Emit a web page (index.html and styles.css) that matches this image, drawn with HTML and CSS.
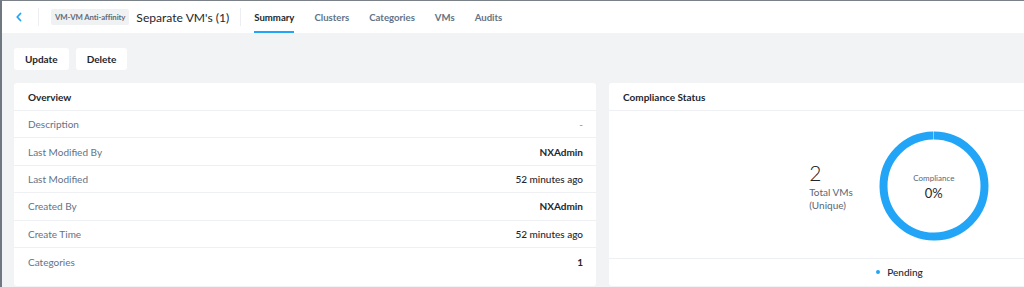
FILE: index.html
```html
<!DOCTYPE html>
<html lang="en">
<head>
    <meta charset="UTF-8">
    <meta name="viewport" content="width=device-width, initial-scale=1.0">
    <title>Separate VM's (1) - Summary</title>
    <link rel="stylesheet" href="styles.css">
</head>
<body>
    <div class="page">
        <header class="topbar">
            <a class="back-btn" href="#">
                <svg width="8" height="10" viewBox="0 0 8 10"><path d="M5.5 1.5 L2.2 5 L5.5 8.5" fill="none" stroke="#22a5f7" stroke-width="1.8" stroke-linecap="round" stroke-linejoin="round"/></svg>
            </a>
            <span class="topbar-sep"></span>
            <span class="entity-badge">VM-VM Anti-affinity</span>
            <h1 class="entity-title">Separate VM's (1)</h1>
            <span class="topbar-sep topbar-sep--wide"></span>
            <nav class="tabs">
                <a class="tab tab--active" href="#">Summary</a>
                <a class="tab" href="#">Clusters</a>
                <a class="tab" href="#">Categories</a>
                <a class="tab" href="#">VMs</a>
                <a class="tab" href="#">Audits</a>
            </nav>
        </header>

        <main class="content">
            <div class="actions">
                <button class="action-btn">Update</button>
                <button class="action-btn">Delete</button>
            </div>

            <div class="cards">
                <section class="card">
                    <div class="card-header">Overview</div>
                    <div class="detail-row">
                        <span class="detail-label">Description</span>
                        <span class="detail-value detail-value--muted">-</span>
                    </div>
                    <div class="detail-row">
                        <span class="detail-label">Last Modified By</span>
                        <span class="detail-value detail-value--strong">NXAdmin</span>
                    </div>
                    <div class="detail-row">
                        <span class="detail-label">Last Modified</span>
                        <span class="detail-value">52 minutes ago</span>
                    </div>
                    <div class="detail-row">
                        <span class="detail-label">Created By</span>
                        <span class="detail-value detail-value--strong">NXAdmin</span>
                    </div>
                    <div class="detail-row">
                        <span class="detail-label">Create Time</span>
                        <span class="detail-value">52 minutes ago</span>
                    </div>
                    <div class="detail-row detail-row--last">
                        <span class="detail-label">Categories</span>
                        <span class="detail-value detail-value--strong">1</span>
                    </div>
                </section>

                <section class="card">
                    <div class="card-header">Compliance Status</div>
                    <div class="compliance-body">
                        <div class="vm-stat">
                            <div class="vm-count">2</div>
                            <div class="vm-caption">Total VMs<br>(Unique)</div>
                        </div>
                        <div class="donut">
                            <svg width="110" height="110" viewBox="0 0 110 110">
                                <circle cx="55" cy="55" r="50.5" fill="none" stroke="#22a5f7" stroke-width="8"
                                        stroke-dasharray="316.3 1" transform="rotate(-90.5 55 55)"/>
                            </svg>
                            <div class="donut-label">
                                <span class="donut-title">Compliance</span>
                                <span class="donut-value">0%</span>
                            </div>
                        </div>
                    </div>
                    <div class="legend">
                        <span class="legend-dot"></span>
                        <span>Pending</span>
                    </div>
                </section>
            </div>
        </main>
    </div>
</body>
</html>
```

FILE: styles.css
```css
:root {
    --primary: #22a5f7;
    --text: #22272e;
    --label: #627386;
    --bg: #f2f3f5;
    --border: #eef0f3;
    --radius: 3px;
}

html, body {
    margin: 0;
    overflow: hidden;
}

body {
    background: var(--bg);
    font-family: "Lato", "Open Sans", sans-serif;
    color: var(--text);
    border-top: 1px solid #7b8189;
    border-left: 2px solid #6f7780;
    min-height: 100vh;
    box-sizing: border-box;
}

.page {
    width: 1204px;
}

.topbar {
    height: 32px;
    background: white;
    display: flex;
    align-items: center;
    padding-left: 13px;
}

.back-btn {
    display: flex;
    align-items: center;
    width: 10px;
    height: 14px;
}

.topbar-sep {
    width: 1px;
    height: 18px;
    background: #eceef1;
    margin: 0 12px 0 13px;
}

.topbar-sep--wide {
    margin: 0 13px 0 11px;
}

.entity-badge {
    background: #f0f1f3;
    color: #5f6b78;
    font-size: 7.8px;
    font-weight: 700;
    padding: 0 4px;
    height: 16px;
    line-height: 16px;
    border-radius: 2px;
    letter-spacing: -0.1px;
}

.entity-title {
    margin: 0 0 0 7px;
    font-size: 12.1px;
    font-weight: 400;
    color: var(--text);
}

.tabs {
    display: flex;
    gap: 20px;
    align-self: stretch;
}

.tab {
    display: flex;
    align-items: center;
    font-size: 9.6px;
    font-weight: 700;
    color: #627386;
    text-decoration: none;
    border-bottom: 2px solid transparent;
    padding-top: 2px;
}

.tab--active {
    color: var(--text);
    border-bottom-color: var(--primary);
}

.content {
    padding: 15px 0 0 12px;
}

.actions {
    display: flex;
    gap: 7px;
    margin-bottom: 13px;
}

.action-btn {
    height: 22px;
    padding: 0 11px;
    background: white;
    border: none;
    border-radius: var(--radius);
    font-family: inherit;
    font-size: 10px;
    font-weight: 700;
    color: var(--text);
    cursor: pointer;
}

.cards {
    display: grid;
    grid-template-columns: 582px 581px;
    gap: 13px;
}

.card {
    background: white;
    border-radius: var(--radius);
    height: 203px;
    display: flex;
    flex-direction: column;
}

.card-header {
    height: 28px;
    padding: 0 14px;
    display: flex;
    align-items: center;
    font-size: 10px;
    font-weight: 700;
    border-bottom: 1px solid var(--border);
    box-sizing: border-box;
}

.detail-row {
    height: 27.4px;
    padding: 0 13px 0 14px;
    display: flex;
    align-items: center;
    justify-content: space-between;
    border-bottom: 1px solid var(--border);
    box-sizing: border-box;
    font-size: 10px;
}

.detail-row--last {
    border-bottom: none;
}

.detail-label {
    color: var(--label);
}

.detail-value {
    color: var(--text);
    font-weight: 500;
}

.detail-value--strong {
    font-weight: 700;
}

.detail-value--muted {
    color: #8a96a3;
}

.compliance-body {
    height: 148px;
    display: flex;
    align-items: center;
    justify-content: center;
    gap: 26px;
    border-bottom: 1px solid var(--border);
    padding-top: 2px;
    box-sizing: border-box;
}

.vm-stat {
    margin-top: 2px;
}

.vm-count {
    font-size: 21px;
    font-weight: 300;
    line-height: 24px;
    margin-bottom: 1px;
}

.vm-caption {
    font-size: 10px;
    line-height: 13px;
    color: #5a6675;
}

.donut {
    position: relative;
    width: 110px;
    height: 110px;
    margin-right: 1px;
}

.donut svg {
    display: block;
}

.donut-label {
    position: absolute;
    inset: 0;
    display: flex;
    flex-direction: column;
    align-items: center;
    justify-content: center;
    padding-top: 2px;
}

.donut-title {
    font-size: 8px;
    color: #5a6675;
}

.donut-value {
    font-size: 13px;
    margin-top: 2px;
}

.legend {
    flex: 1;
    display: flex;
    align-items: center;
    justify-content: center;
    gap: 7px;
    font-size: 10px;
    font-weight: 500;
    padding-bottom: 2px;
}

.legend-dot {
    width: 4px;
    height: 4px;
    border-radius: 50%;
    background: var(--primary);
}
```
